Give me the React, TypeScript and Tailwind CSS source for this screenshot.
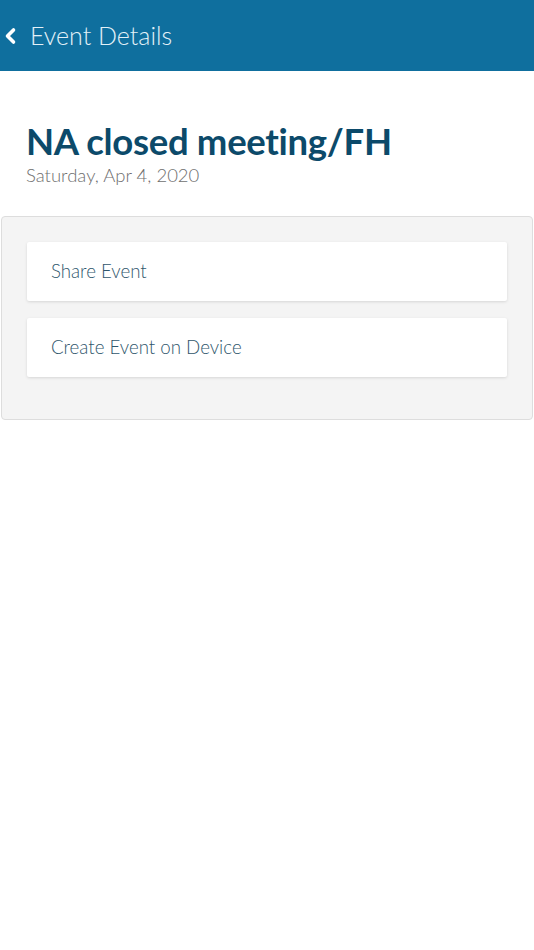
import React from 'react';

const actions = ['Share Event', 'Create Event on Device'];

export default function App() {
  return (
    <div className="min-h-[950px] bg-white" style={{ fontFamily: '"Lato", "Open Sans", sans-serif' }}>
      {/* Header */}
      <div className="flex h-[71px] items-center bg-[#0f6f9e] pl-[3px]">
        <svg className="h-[18px] w-[14px]" viewBox="0 0 14 18" fill="none">
          <path d="M10.5 3L4.5 9L10.5 15" stroke="#ffffff" strokeWidth={3.6} strokeLinecap="round" strokeLinejoin="round" />
        </svg>
        <span className="ml-[13px] text-[25px] font-light text-[#e3f1f8]">Event Details</span>
      </div>

      {/* Title */}
      <div className="px-[26px] pt-[47px] pb-[30px]">
        <h1 className="text-[36.5px] leading-[46px] font-bold tracking-[-0.3px] text-[#0c4a6a]">NA closed meeting/FH</h1>
        <p className="text-[18.5px] leading-[22px] font-light text-[#6f6f6f]">Saturday, Apr 4, 2020</p>
      </div>

      {/* Actions panel */}
      <div className="mx-[1px] flex flex-col gap-[17px] rounded-[4px] border border-[#dddddd] bg-[#f4f4f4] px-[25px] pt-[25px] pb-[42px]">
        {actions.map((a) => (
          <button
            key={a}
            className="flex h-[59px] items-center rounded-[2px] bg-white pl-[24px] text-left text-[18.7px] font-light text-[#2f566c] shadow-[0_1px_3px_rgba(0,0,0,0.12)]"
          >
            {a}
          </button>
        ))}
      </div>
    </div>
  );
}
